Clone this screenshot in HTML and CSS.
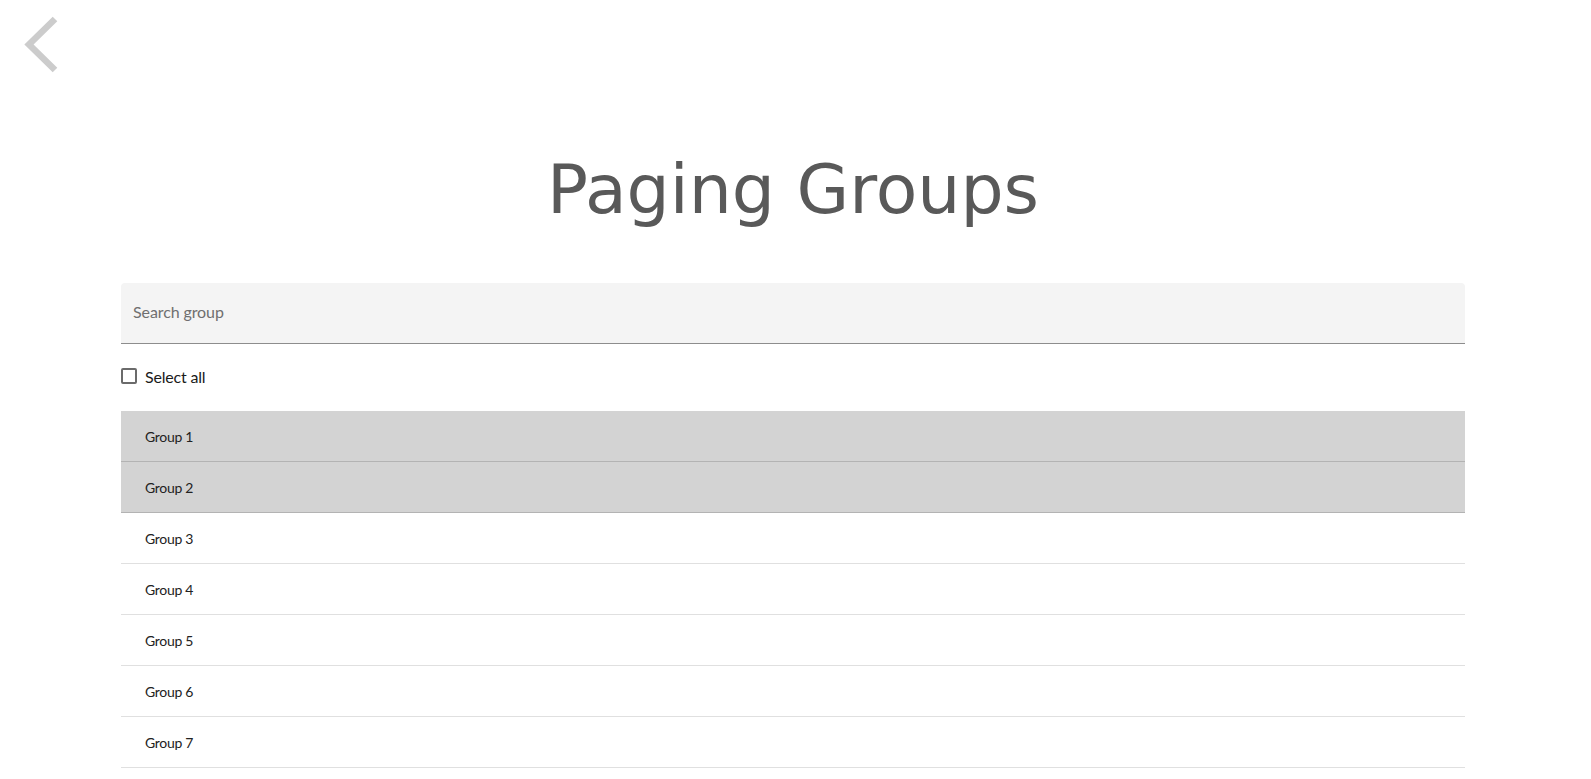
FILE: index.html
```html
<!DOCTYPE html>
<html lang="en">
<head>
    <meta charset="UTF-8">
    <meta name="viewport" content="width=device-width, initial-scale=1.0">
    <title>Paging Groups</title>
    <link rel="stylesheet" href="styles.css">
</head>
<body>
    <div class="top-bar">
        <a class="back-link" href="#">
            <svg width="40" height="62" viewBox="0 0 40 62">
                <polyline points="33,5 7,30.5 33,56" fill="none" stroke="#cccccc" stroke-width="6.5"/>
            </svg>
        </a>
    </div>

    <div class="page">
        <h1 class="page-title">Paging Groups</h1>

        <div class="search-box">
            <input type="text" class="search-input" placeholder="Search group">
        </div>

        <label class="select-all">
            <span class="checkbox"></span>
            <span>Select all</span>
        </label>

        <ul class="group-list">
            <li class="group-item selected">Group 1</li>
            <li class="group-item selected">Group 2</li>
            <li class="group-item">Group 3</li>
            <li class="group-item">Group 4</li>
            <li class="group-item">Group 5</li>
            <li class="group-item">Group 6</li>
            <li class="group-item">Group 7</li>
        </ul>
    </div>
</body>
</html>
```

FILE: styles.css
```css
* {
    margin: 0;
    padding: 0;
    box-sizing: border-box;
}

body {
    background-color: #fff;
    font-family: Lato, "Liberation Sans", sans-serif;
    overflow: hidden;
}

.top-bar {
    height: 76px;
    padding: 14px 0 0 22px;
}

.back-link svg {
    display: block;
}

.page {
    margin: 0 126px 0 121px;
}

.page-title {
    margin-top: 74px;
    text-align: center;
    font-family: "DejaVu Sans", sans-serif;
    font-weight: normal;
    font-size: 68px;
    line-height: 80px;
    color: #595959;
}

.search-box {
    margin-top: 53px;
    height: 61px;
    background-color: #f4f4f4;
    border-bottom: 1px solid #8d8d8d;
    border-radius: 4px 4px 0 0;
}

.search-input {
    width: 100%;
    height: 100%;
    padding: 0 12px 3px;
    border: none;
    outline: none;
    background: transparent;
    font-family: Lato, "Liberation Sans", sans-serif;
    font-size: 16px;
    letter-spacing: -0.1px;
    color: #161616;
}

.search-input::placeholder {
    color: #6f6f6f;
}

.select-all {
    margin-top: 24px;
    display: flex;
    align-items: center;
    gap: 8px;
    height: 16px;
    font-size: 16px;
    letter-spacing: -0.2px;
    color: #1a1a1a;
    cursor: pointer;
}

.checkbox {
    width: 16px;
    height: 16px;
    border: 2px solid #6b6b6b;
    border-radius: 2px;
}

.group-list {
    list-style: none;
    margin-top: 27px;
}

.group-item {
    height: 51px;
    display: flex;
    align-items: center;
    padding-left: 24px;
    font-size: 14px;
    letter-spacing: -0.3px;
    color: #222;
    border-bottom: 1px solid #e0e0e0;
}

.group-item.selected {
    background-color: #d3d3d3;
    border-bottom-color: #b3b3b3;
}
```
